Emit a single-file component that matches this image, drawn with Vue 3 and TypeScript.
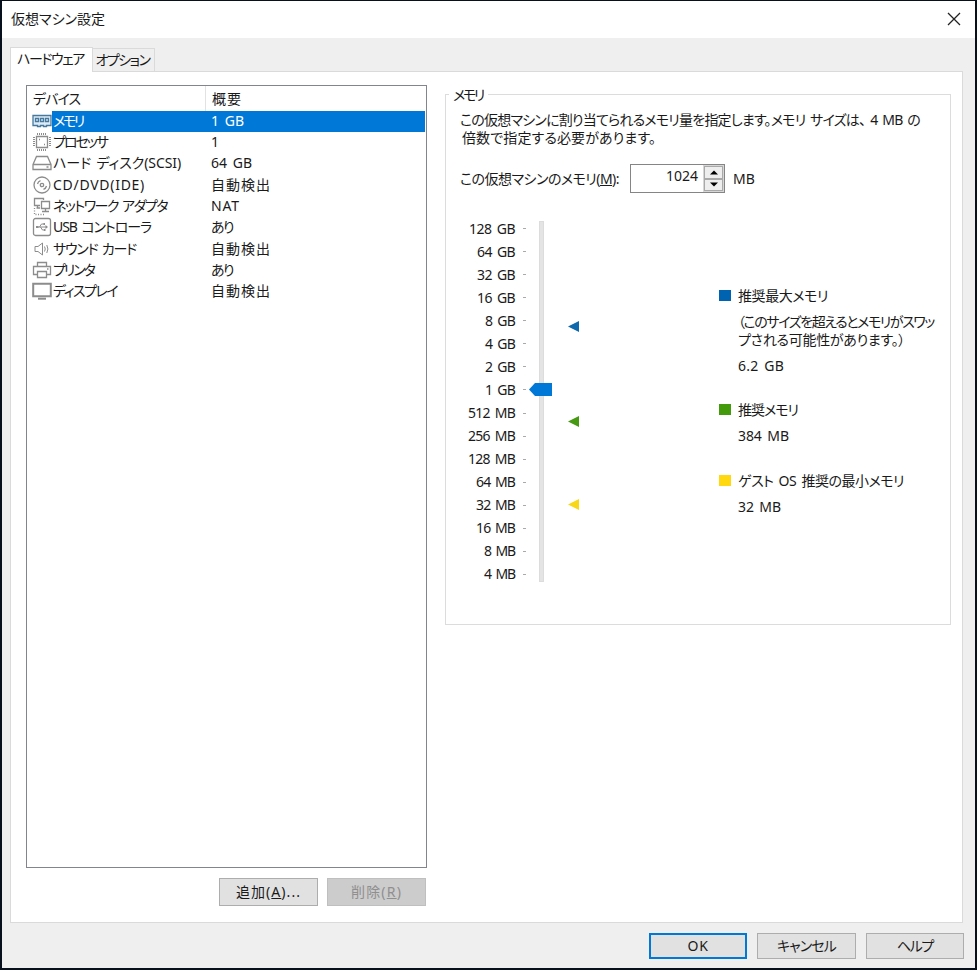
<script setup lang="ts">
import { ref, type Directive } from 'vue'

interface Device {
  icon: string
  name: string
  nameWidth: number
  summary: string
  summaryWidth: number
}

const devices: Device[] = [
  { icon: 'memory', name: 'メモリ', nameWidth: 30, summary: '1 GB', summaryWidth: 33 },
  { icon: 'cpu', name: 'プロセッサ', nameWidth: 54, summary: '1', summaryWidth: 8 },
  { icon: 'disk', name: 'ハード ディスク(SCSI)', nameWidth: 128, summary: '64 GB', summaryWidth: 41 },
  { icon: 'cd', name: 'CD/DVD(IDE)', nameWidth: 92, summary: '自動検出', summaryWidth: 60 },
  { icon: 'network', name: 'ネットワーク アダプタ', nameWidth: 114, summary: 'NAT', summaryWidth: 29 },
  { icon: 'usb', name: 'USB コントローラ', nameWidth: 98, summary: 'あり', summaryWidth: 22 },
  { icon: 'sound', name: 'サウンド カード', nameWidth: 83, summary: '自動検出', summaryWidth: 60 },
  { icon: 'printer', name: 'プリンタ', nameWidth: 41, summary: 'あり', summaryWidth: 22 },
  { icon: 'display', name: 'ディスプレイ', nameWidth: 64, summary: '自動検出', summaryWidth: 60 },
]

const scale = ['128 GB', '64 GB', '32 GB', '16 GB', '8 GB', '4 GB', '2 GB', '1 GB',
  '512 MB', '256 MB', '128 MB', '64 MB', '32 MB', '16 MB', '8 MB', '4 MB']

const selected = ref(0)
const memory = ref(1024)

// Distributes spacing between glyphs so that a label takes its dialog width.
const vFit: Directive<HTMLElement, number> = {
  mounted(el, { value }) {
    const count = Array.from(el.textContent ?? '').length
    const width = el.getBoundingClientRect().width
    if (count > 1 && width > 0) {
      el.style.letterSpacing = `${((value - width) / count).toFixed(3)}px`
    }
  },
}
</script>

<template>
  <div class="window">
    <header class="titlebar">
      <span v-fit="94" class="t">仮想マシン設定</span>
      <svg class="close" width="14" height="14" viewBox="0 0 14 14"><path d="M1 1 13 13M13 1 1 13" /></svg>
    </header>

    <nav class="tabs">
      <div class="tab active"><span v-fit="67" class="t">ハードウェア</span></div>
      <div class="tab"><span v-fit="54" class="t">オプション</span></div>
    </nav>

    <main class="panel">
      <section class="left">
        <div class="list">
          <div class="head">
            <div class="head-name"><span v-fit="47" class="t">デバイス</span></div>
            <div class="head-sum"><span v-fit="30" class="t">概要</span></div>
          </div>
          <div
            v-for="(d, i) in devices"
            :key="d.icon"
            class="row"
            :class="{ selected: i === selected }"
            @click="selected = i"
          >
            <svg class="icon" width="20" height="20" viewBox="0 0 20 20">
              <g v-if="d.icon === 'memory'" class="mem">
                <path d="M1 4.500H19V14.500H14.500V15.500H11.500V14.500H8.500V15.500H5.500V14.500H1Z" />
                <path d="M3.500 7.500H6.500V10.500H3.500ZM8.500 7.500H11.500V10.500H8.500ZM13.500 7.500H16.500V10.500H13.500Z" />
              </g>
              <g v-else-if="d.icon === 'cpu'">
                <path d="M4.500 4.500H15.500V15.500H4.500Z" />
                <path class="thin" d="M5.500 1V3M7.500 1V3M9.500 1V3M11.500 1V3M13.500 1V3M5.500 17V19M7.500 17V19M9.500 17V19M11.500 17V19M13.500 17V19M1 5.500H3M1 7.500H3M1 9.500H3M1 11.500H3M1 13.500H3M17 5.500H19M17 7.500H19M17 9.500H19M17 11.500H19M17 13.500H19" />
                <path d="M7 7.500H8M12 12.500H13" />
              </g>
              <g v-else-if="d.icon === 'disk'">
                <path d="M1 11.500 4.500 3.500H15.500L19 11.500V16.500H1ZM1 11.500H19M14.500 14H16.500" />
              </g>
              <g v-else-if="d.icon === 'cd'">
                <circle cx="10" cy="10" r="8" />
                <circle cx="10" cy="10" r="1.700" />
                <path d="M5.500 9A4.500 4.500 0 0 1 8.500 5.700M14.500 11A4.500 4.500 0 0 1 11.500 14.300" />
              </g>
              <g v-else-if="d.icon === 'network'">
                <path d="M8 9.500H2.500V2.500H11.500V4M4.500 12H8M5.500 9.500V12" />
                <path d="M9.500 5.500H17.500V12.500H9.500ZM13.500 13V15.500M10 15.500H17" />
                <path class="dots" d="M2.500 12V18.500H13" />
              </g>
              <g v-else-if="d.icon === 'usb'">
                <rect x="1.500" y="1.500" width="17" height="17" rx="2" />
                <path class="thin" d="M5 10H15M7.500 10 9.500 7H12M8.500 10 10.500 13H12.500" />
                <path class="dot" d="M13.500 8 16 10 13.500 12ZM4 9H6.500V11H4ZM11.500 6H13V8H11.500ZM12 12H13.500V14H12Z" />
              </g>
              <g v-else-if="d.icon === 'sound'">
                <path class="thin" d="M3 7.500H6L10.500 4V16L6 12.500H3ZM12.500 7.500Q14 10 12.500 12.500M14.800 6Q17 10 14.800 14" />
              </g>
              <g v-else-if="d.icon === 'printer'">
                <path d="M5.500 6.500V2.500H14.500V6.500M5 14.500H1.500V6.500H18.500V14.500H15M5.500 11.500H14.500V17.500H5.500ZM15 9H16.500" />
              </g>
              <g v-else>
                <path class="heavy" d="M1.200 2.800H18.800V15.200H1.200Z" />
                <path class="heavy" d="M6 17.700H14" />
              </g>
            </svg>
            <div class="name"><span v-fit="d.nameWidth" class="t">{{ d.name }}</span></div>
            <div class="summary"><span v-fit="d.summaryWidth" class="t">{{ d.summary }}</span></div>
          </div>
        </div>
        <div class="list-actions">
          <button class="btn"><span v-fit="65" class="t">追加(<u>A</u>)...</span></button>
          <button class="btn disabled" disabled><span v-fit="51" class="t">削除(<u>R</u>)</span></button>
        </div>
      </section>

      <section class="group">
        <h2 class="legend"><span v-fit="30" class="t">メモリ</span></h2>
        <div class="description">
          <div><span v-fit="460" class="t">この仮想マシンに割り当てられるメモリ量を指定します。メモリ サイズは、 4 MB の</span></div>
          <div class="second"><span v-fit="194" class="t">倍数で指定する必要があります。</span></div>
        </div>
        <div class="field">
          <label><span v-fit="159" class="t">この仮想マシンのメモリ(<u>M</u>):</span></label>
          <div class="spin">
            <span class="value">{{ memory }}</span>
            <div class="arrows">
              <button class="arrow" @click="memory += 4"><svg width="8" height="5" viewBox="0 0 8 5"><path d="M0 4.500 4 .5 8 4.500Z" /></svg></button>
              <button class="arrow" @click="memory -= 4"><svg width="8" height="5" viewBox="0 0 8 5"><path d="M0 .5 4 4.500 8 .5Z" /></svg></button>
            </div>
          </div>
          <span v-fit="22" class="t">MB</span>
        </div>

        <div class="memory">
          <div class="scale">
            <div v-for="(s, i) in scale" :key="s" class="tick">
              <span v-fit="i === 0 ? 46 : i < 4 ? 38 : i < 8 ? 30 : i < 11 ? 47 : i < 14 ? 39 : 31" class="t">{{ s }}</span><i></i>
            </div>
          </div>
          <div class="track">
            <svg class="thumb" width="23" height="13" viewBox="0 0 23 13"><path d="M0 6.500 6 0H23V13H6Z" /></svg>
            <svg class="marker max" width="11" height="11" viewBox="0 0 11 11"><path d="M0 5.500 11 0V11Z" /></svg>
            <svg class="marker rec" width="11" height="11" viewBox="0 0 11 11"><path d="M0 5.500 11 0V11Z" /></svg>
            <svg class="marker min" width="11" height="11" viewBox="0 0 11 11"><path d="M0 5.500 11 0V11Z" /></svg>
          </div>
          <div class="hints">
            <div class="hint">
              <i class="swatch max"></i>
              <div>
                <p><span v-fit="90" class="t">推奨最大メモリ</span></p>
                <div class="note">
                  <div><span v-fit="196" class="t">（このサイズを超えるとメモリがスワッ</span></div>
                  <div><span v-fit="167" class="t">プされる可能性があります。）</span></div>
                </div>
                <p><span v-fit="46" class="t">6.2 GB</span></p>
              </div>
            </div>
            <div class="hint">
              <i class="swatch rec"></i>
              <div>
                <p><span v-fit="60" class="t">推奨メモリ</span></p>
                <p class="size"><span v-fit="51" class="t">384 MB</span></p>
              </div>
            </div>
            <div class="hint">
              <i class="swatch min"></i>
              <div>
                <p><span v-fit="166" class="t">ゲスト OS 推奨の最小メモリ</span></p>
                <p class="size"><span v-fit="43" class="t">32 MB</span></p>
              </div>
            </div>
          </div>
        </div>
      </section>
    </main>

    <footer class="footer">
      <button class="btn primary"><span v-fit="21" class="t">OK</span></button>
      <button class="btn"><span v-fit="59" class="t">キャンセル</span></button>
      <button class="btn"><span v-fit="36" class="t">ヘルプ</span></button>
    </footer>
  </div>
</template>

<style>
body {
  background: #fff;
}
</style>

<style scoped>
* {
  box-sizing: border-box;
}
.window {
  width: 977px;
  height: 970px;
  display: flex;
  flex-direction: column;
  border: 2px solid #07101c;
  border-top-width: 1px;
  background: #efefef;
  color: #1a1a1a;
  font: 14px/20px "Noto Sans", "Noto Sans CJK JP", sans-serif;
  overflow: hidden;
}
.t {
  display: inline-block;
  white-space: pre;
  word-spacing: 2px;
  font-feature-settings: "palt";
}
.titlebar {
  height: 37px;
  flex: none;
  display: flex;
  justify-content: space-between;
  align-items: center;
  padding: 0 14px 1px 9px;
  background: #fff;
}
.close {
  fill: none;
  stroke: #222;
  stroke-width: 1.3;
}
.tabs {
  height: 33px;
  flex: none;
  display: flex;
  align-items: flex-end;
  padding-left: 8px;
}
.tab {
  width: 62px;
  height: 23px;
  display: flex;
  align-items: center;
  justify-content: center;
  padding-right: 2px;
  border: 1px solid #dadada;
  border-left: 0;
  border-bottom: 0;
}
.tab.active {
  width: 83px;
  height: 25px;
  margin-bottom: -1px;
  padding-bottom: 2px;
  border-left: 1px solid #dadada;
  background: #fff;
  z-index: 1;
}
.panel {
  height: 852px;
  flex: none;
  display: flex;
  gap: 18px;
  margin: 0 12px 0 8px;
  padding: 13px 10px 0 15px;
  border: 1px solid #dadada;
  background: #fff;
}
.left {
  width: 401px;
  flex: none;
}
.list {
  height: 783px;
  border: 1px solid #82868c;
}
.head {
  height: 24.600px;
  display: flex;
}
.head-name {
  width: 179px;
  padding: 3px 0 0 6px;
  border-right: 1px solid #e2e2e2;
}
.head-sum {
  padding: 3px 0 0 6px;
}
.row {
  height: 21.350px;
  display: flex;
  padding: 0 1px 0 5px;
}
.icon {
  flex: none;
  fill: none;
  stroke: #8c8c8c;
  stroke-width: 1.3;
}
.icon .thin {
  stroke-width: 1;
}
.icon .heavy {
  stroke-width: 2;
}
.icon .dots {
  stroke-dasharray: 1 1.5;
}
.icon .dot {
  fill: #8c8c8c;
  stroke: none;
}
.mem {
  fill: #dcecf7;
  stroke: #47799e;
}
.name {
  width: 153px;
  padding-left: 1px;
}
.summary {
  flex: 1;
  padding-left: 6px;
}
.selected .name,
.selected .summary {
  background: #0078d7;
  color: #fff;
}
.list-actions {
  display: flex;
  justify-content: flex-end;
  gap: 9px;
  padding: 10px 1px 0 0;
}
.btn {
  width: 99px;
  height: 28px;
  display: flex;
  align-items: center;
  justify-content: center;
  padding: 0;
  border: 1px solid #adadad;
  background: #e1e1e1;
  color: #1a1a1a;
  font: inherit;
}
.btn.disabled {
  border-color: #bfbfbf;
  background: #ccc;
  color: #8f8f8f;
}
.group {
  width: 506px;
  height: 531px;
  flex: none;
  margin-top: 9px;
  border: 1px solid #dcdcdc;
}
.legend {
  width: 39px;
  height: 20px;
  margin: -10px 0 0 3px;
  padding-left: 4px;
  background: #fff;
  font: inherit;
}
.description {
  padding: 6px 0 0 14px;
  line-height: 18px;
}
.second {
  padding-left: 2px;
}
.field {
  height: 29px;
  display: flex;
  align-items: center;
  margin-top: 17px;
  padding-left: 14px;
}
.spin {
  width: 95px;
  height: 29px;
  display: flex;
  justify-content: flex-end;
  margin: 0 8px 0 11px;
  border: 1px solid #858585;
}
.value {
  padding: 1px 5px 0 0;
}
.arrows {
  width: 21px;
  display: flex;
  flex-direction: column;
  padding: 1px;
  background: #d6d6d6;
}
.arrow {
  flex: 1;
  display: flex;
  align-items: center;
  justify-content: center;
  padding: 0;
  border: 1px solid #a9a9a9;
  background: #eee;
}
.memory {
  display: flex;
  margin-top: 24px;
}
.scale {
  width: 80px;
}
.tick {
  height: 23.070px;
  display: flex;
  align-items: center;
  justify-content: flex-end;
}
.tick i {
  width: 3px;
  height: 1px;
  margin-left: 8px;
  background: #aaa;
}
.track {
  position: relative;
  width: 5px;
  height: 361px;
  margin: 4px 0 0 13px;
  background: #e4e4e4;
  border: 1px solid #dcdcdc;
}
.thumb {
  position: absolute;
  left: -11px;
  top: 161px;
  fill: #0078d7;
}
.marker {
  position: absolute;
  left: 28px;
}
.marker.max {
  top: 99px;
  fill: #0d68ac;
}
.marker.rec {
  top: 194px;
  fill: #459a12;
}
.marker.min {
  top: 277px;
  fill: #f8d716;
}
.hints {
  margin: 69px 0 0 175px;
}
.hint {
  display: flex;
  gap: 7px;
  margin-bottom: 24px;
}
.hint p {
  margin: 0;
}
.hint .size {
  margin-top: 6px;
}
.note {
  margin: 7px 0;
  line-height: 18px;
}
.swatch {
  width: 12px;
  height: 11px;
  margin-top: 4px;
}
.hint:last-child {
  margin-top: 25px;
}
.swatch.max {
  background: #0063b1;
}
.swatch.rec {
  background: #439a0b;
}
.swatch.min {
  background: #ffd80f;
}
.footer {
  display: flex;
  justify-content: flex-end;
  gap: 10px;
  padding: 10px 11px 0 0;
}
.footer .btn {
  width: 98.400px;
  height: 26px;
}
.footer .btn.primary {
  border: 2px solid #0078d7;
}
</style>
